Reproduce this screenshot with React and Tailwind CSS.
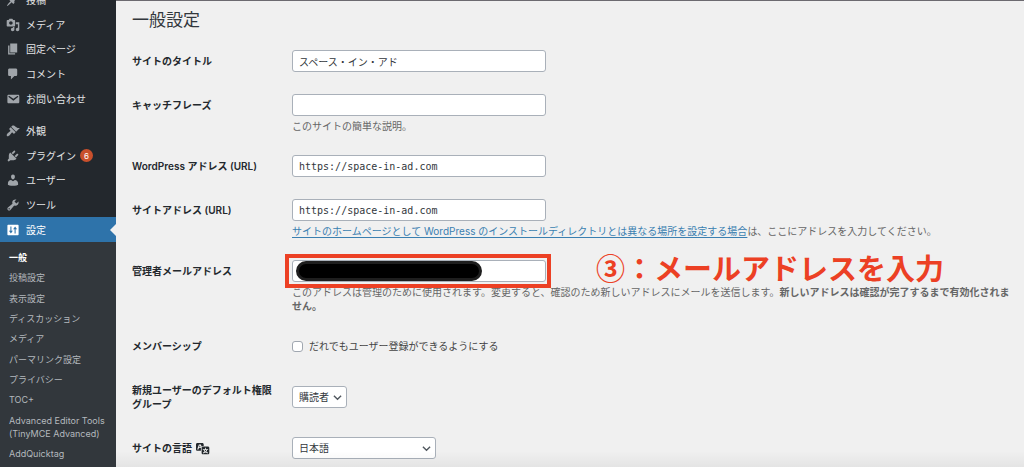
import React from "react";

const ICONS = {
  post: "M10.44 3.02l1.82-1.82 6.36 6.35-1.83 1.82c-1.05-.68-2.48-.57-3.41.36l-.75.75c-.92.93-1.04 2.35-.35 3.41l-1.83 1.82-2.41-2.41-2.8 2.79c-.42.42-3.38 2.71-3.8 2.29s1.86-3.39 2.28-3.81l2.79-2.79L4.1 9.36l1.83-1.82c1.05.69 2.48.57 3.4-.36l.75-.75c.93-.92 1.05-2.35.36-3.41z",
  media: "M13 11V4c0-.55-.45-1-1-1h-1.67L9 1H5L3.67 3H2c-.55 0-1 .45-1 1v7c0 .55.45 1 1 1h10c.55 0 1-.45 1-1zM7 4.5c1.38 0 2.5 1.12 2.5 2.5S8.38 9.5 7 9.5 4.5 8.38 4.5 7 5.62 4.5 7 4.5zM14 6h5v10.5c0 1.38-1.12 2.5-2.5 2.5S14 17.88 14 16.5s1.12-2.5 2.5-2.5c.17 0 .34.02.5.05V9h-3V6zm-4 8.05V13h2v3.5c0 1.38-1.12 2.5-2.5 2.5S7 17.88 7 16.5 8.12 14 9.5 14c.17 0 .34.02.5.05z",
  page: "M6 15V2h10v13H6zm-1 1h8v2H3V5h2v11z",
  comments: "M5 2h9c1.1 0 2 .9 2 2v7c0 1.1-.9 2-2 2h-2l-5 5v-5H5c-1.1 0-2-.9-2-2V4c0-1.1.9-2 2-2z",
  email: "M3.87 4h13.25C18.37 4 19 4.59 19 5.79v8.42c0 1.19-.63 1.79-1.88 1.79H3.87c-1.25 0-1.88-.6-1.88-1.79V5.79c0-1.2.63-1.79 1.88-1.79zm6.62 8.6l6.74-5.53c.24-.2.43-.66.13-1.07-.29-.41-.82-.42-1.17-.17l-5.7 3.86L4.8 5.83c-.35-.25-.88-.24-1.17.17-.3.41-.11.87.13 1.07z",
  appearance: "M14.48 11.06L7.41 3.99l1.5-1.5c.5-.56 2.3-.47 3.51.32 1.21.8 1.43 1.28 2.91 2.1 1.18.64 2.45 1.26 4.45.85zm-.71.71L6.7 4.7 4.93 6.47c-.39.39-.39 1.02 0 1.41l1.06 1.06c.39.39.39 1.03 0 1.42-.6.6-1.43 1.11-2.21 1.69-.35.26-.7.53-1.01.84C1.43 14.23.4 16.08 1.4 17.07c.99 1 2.84-.03 4.18-1.36.31-.31.58-.66.85-1.02.57-.78 1.08-1.61 1.69-2.21.39-.39 1.02-.39 1.41 0l1.06 1.06c.39.39 1.02.39 1.41 0z",
  plugins: "M13.11 4.36L9.87 7.6 8 5.73l3.24-3.24c.35-.34 1.05-.2 1.56.32.52.51.66 1.21.31 1.55zm-8 1.77l.91-1.12 9.01 9.01-1.19.84c-.71.71-2.63 1.16-3.82 1.16H6.14L4.9 17.26c-.59.59-1.54.59-2.12 0-.59-.58-.59-1.53 0-2.12l1.24-1.24v-3.88c0-1.13.4-3.19 1.09-3.89zm7.26 3.97l3.24-3.24c.34-.35 1.04-.21 1.55.31.52.51.66 1.21.31 1.55l-3.24 3.25z",
  users: "M10 9.25c-2.27 0-2.73-3.44-2.73-3.44C7 4.02 7.82 2 9.97 2c2.16 0 2.98 2.02 2.71 3.81 0 0-.41 3.44-2.68 3.44zm0 2.57L12.72 10c2.39 0 4.52 2.33 4.52 4.53v2.49s-3.65 1.13-7.24 1.13c-3.65 0-7.24-1.13-7.24-1.13v-2.49c0-2.25 1.94-4.48 4.47-4.48z",
  tools: "M16.68 9.77c-1.34 1.34-3.3 1.67-4.95.99l-5.41 6.52c-.99.99-2.59.99-3.58 0s-.99-2.59 0-3.57l6.52-5.42c-.68-1.65-.35-3.61.99-4.95 1.28-1.28 3.12-1.62 4.72-1.06l-2.89 2.89 2.82 2.82 2.86-2.87c.53 1.58.18 3.39-1.08 4.65zM3.81 16.21c.4.39 1.04.39 1.43 0 .4-.4.4-1.04 0-1.43-.39-.4-1.03-.4-1.43 0-.39.39-.39 1.03 0 1.43z",
  settings: "M18 3.5v13c0 .55-.45 1-1 1H3c-.55 0-1-.45-1-1v-13c0-.55.45-1 1-1h14c.55 0 1 .45 1 1zM6.25 5v6H4.2L7 15l2.8-4H7.75V5zM12.25 9v6h1.5V9h2.05L13 5l-2.8 4z",
  translation: "M11 7H9.49c-.63 0-1.25.3-1.59.7L7 5H4.13l-2.39 7h1.69l.74-2H7v4H2c-1.1 0-2-.9-2-2V5c0-1.1.9-2 2-2h7c1.1 0 2 .9 2 2v2zM6.51 9H4.49l1-2.93zM10 8h7c1.1 0 2 .9 2 2v7c0 1.1-.9 2-2 2h-7c-1.1 0-2-.9-2-2v-7c0-1.1.9-2 2-2zm7.25 5v-1.08h-3.17V9.75h-1.16v2.17H9.75V13h1.28c.11.85.56 1.85 1.28 2.62-.87.36-1.89.62-2.31.62-.01.02.22.97.2 1.46.84 0 2.21-.5 3.28-1.15 1.09.65 2.48 1.15 3.34 1.15-.02-.49.2-1.44.2-1.46-.43 0-1.49-.27-2.38-.63.7-.77 1.14-1.77 1.25-2.61h1.36zm-3.81 1.93c-.5-.46-.85-1.13-1.01-1.93h2.09c-.17.8-.51 1.47-1 1.93l-.04.03s-.03-.02-.04-.03z",
};

function Icon({ name, className = "" }) {
  return (
    <svg viewBox="0 0 20 20" fill="currentColor" fillRule="evenodd" aria-hidden="true" className={`size-[14px] shrink-0 ${className}`}>
      <path d={ICONS[name]} />
    </svg>
  );
}

const MENU_TOP = [
  ["post", "投稿"],
  ["media", "メディア"],
  ["page", "固定ページ"],
  ["comments", "コメント"],
  ["email", "お問い合わせ"],
];

const MENU_ADMIN = [
  ["appearance", "外観"],
  ["plugins", "プラグイン", 6],
  ["users", "ユーザー"],
  ["tools", "ツール"],
  ["settings", "設定"],
];

const SUBMENU = [
  "一般",
  "投稿設定",
  "表示設定",
  "ディスカッション",
  "メディア",
  "パーマリンク設定",
  "プライバシー",
  "TOC+",
  "Advanced Editor Tools (TinyMCE Advanced)",
  "AddQuicktag",
];

function Menu({ items, active, className = "" }) {
  return (
    <ul className={`grid h-[123px] auto-rows-fr ${className}`}>
      {items.map(([icon, label, count]) => (
        <li key={label} className="grid">
          <a
            href="#"
            className={`relative flex items-center gap-[6px] pl-[6px] ${label === active ? "bg-[#2e73aa] text-white" : "text-[#e4e5e6]"}`}
          >
            <Icon name={icon} className={label === active ? "text-white" : "text-[#a0a5aa]"} />
            <span>{label}</span>
            {count && (
              <span className="-ml-[2px] flex size-[13px] items-center justify-center rounded-full bg-[#c9502c] text-[8px] text-white">
                {count}
              </span>
            )}
            {label === active && (
              <svg viewBox="0 0 6 12" aria-hidden="true" className="absolute top-1/2 right-0 h-3 w-[6px] -translate-y-1/2 fill-[#f0f0f0]">
                <path d="M6 0v12L0 6z" />
              </svg>
            )}
          </a>
        </li>
      ))}
    </ul>
  );
}

function Row({ label, id, children }) {
  return (
    <div className="grid grid-cols-[160px_minmax(0,1fr)]">
      <label htmlFor={id} className="py-[15px] pr-4 font-semibold text-[#23282d]">
        {label}
      </label>
      <div className="self-center py-[11px] pr-[7px]">{children}</div>
    </div>
  );
}

const FIELD = "block h-[22px] rounded-[3px] border border-[#a9b0b9] bg-white px-[6px] text-[#32373c]";

function TextField({ mono, ...props }) {
  return <input type="text" className={`${FIELD} w-[254px] ${mono ? "font-['DejaVu_Sans_Mono',monospace]" : ""}`} {...props} />;
}

function SelectField({ id, value, className }) {
  return (
    <div className={`relative ${className}`}>
      <select id={id} defaultValue={value} className={`${FIELD} w-full appearance-none`}>
        <option>{value}</option>
      </select>
      <svg viewBox="0 0 10 10" fill="none" stroke="#50575e" strokeWidth="1.5" aria-hidden="true" className="pointer-events-none absolute top-[7px] right-[5px] size-[9px]">
        <path d="M1 3l4 4 4-4" />
      </svg>
    </div>
  );
}

function Description({ children }) {
  return <p className="mt-[3px] text-[#666666]">{children}</p>;
}

export default function App() {
  return (
    <div className="flex h-screen overflow-hidden bg-[#f0f0f0] font-['Inter','Noto_Sans_CJK_JP',sans-serif] text-[10px] leading-[14px] text-[#444444]">
      <nav className="w-[116px] shrink-0 bg-[#23282d]">
        <Menu items={MENU_TOP} className="-mt-3" />
        <Menu items={MENU_ADMIN} active="設定" className="mt-2" />
        <div className="h-full bg-[#32373c] pt-[9px] pl-[9px]">
          <ul className="flex h-[209px] flex-col justify-between text-[9px] leading-[13px] text-[#b4b9be]">
            {SUBMENU.map((label, i) => (
              <li key={label}>
                <a href="#" className={i === 0 ? "font-semibold text-white" : ""}>
                  {label}
                </a>
              </li>
            ))}
          </ul>
        </div>
      </nav>

      <main className="relative min-w-0 flex-1 border-t border-[#6c6a70] pl-4">
        <h1 className="pt-[7px] pb-[7px] text-[17px] leading-6 text-[#32373c]">一般設定</h1>
        <form>
          <Row id="title" label="サイトのタイトル">
            <TextField id="title" defaultValue="スペース・イン・アド" />
          </Row>
          <Row id="tagline" label="キャッチフレーズ">
            <TextField id="tagline" />
            <Description>このサイトの簡単な説明。</Description>
          </Row>
          <Row id="wpurl" label="WordPress アドレス (URL)">
            <TextField id="wpurl" mono defaultValue="https://space-in-ad.com" />
          </Row>
          <Row id="siteurl" label="サイトアドレス (URL)">
            <TextField id="siteurl" mono defaultValue="https://space-in-ad.com" />
            <Description>
              <a href="#" className="text-[#3a7fb0] underline underline-offset-2">
                サイトのホームページとして WordPress のインストールディレクトリとは異なる場所を設定する場合
              </a>
              は、ここにアドレスを入力してください。
            </Description>
          </Row>
          <Row id="email" label="管理者メールアドレス">
            <div className="relative">
              <TextField id="email" />
              <div className="absolute top-px left-1 h-5 w-[186px] rounded-full border-[3px] border-[#1e1e1e] bg-black" />
              <div className="absolute -top-[6px] -left-[7px] h-[34px] w-[266px] border-4 border-[#ec4024]" />
              <strong className="absolute -top-[9px] left-[304px] font-['Noto_Sans_CJK_JP',sans-serif] text-[29px] leading-8 font-bold whitespace-nowrap text-[#ec4024]">
                ③：メールアドレスを入力
              </strong>
            </div>
            <Description>
              このアドレスは管理のために使用されます。変更すると、確認のため新しいアドレスにメールを送信します。
              <strong className="font-semibold">新しいアドレスは確認が完了するまで有効化されません。</strong>
            </Description>
          </Row>
          <Row id="membership" label="メンバーシップ">
            <label className="flex h-[22px] items-center gap-[6px]">
              <input id="membership" type="checkbox" className="size-[11px] appearance-none rounded-[3px] border border-[#a0a7b0] bg-white" />
              だれでもユーザー登録ができるようにする
            </label>
          </Row>
          <Row id="role" label="新規ユーザーのデフォルト権限グループ">
            <SelectField id="role" value="購読者" className="w-[55px]" />
          </Row>
          <Row
            id="language"
            label={
              <span className="flex items-center gap-1">
                サイトの言語 <Icon name="translation" />
              </span>
            }
          >
            <SelectField id="language" value="日本語" className="w-[144px]" />
          </Row>
        </form>
        <div className="pointer-events-none absolute inset-x-0 bottom-0 h-4 bg-linear-to-t from-black/5 to-transparent" />
      </main>
    </div>
  );
}
